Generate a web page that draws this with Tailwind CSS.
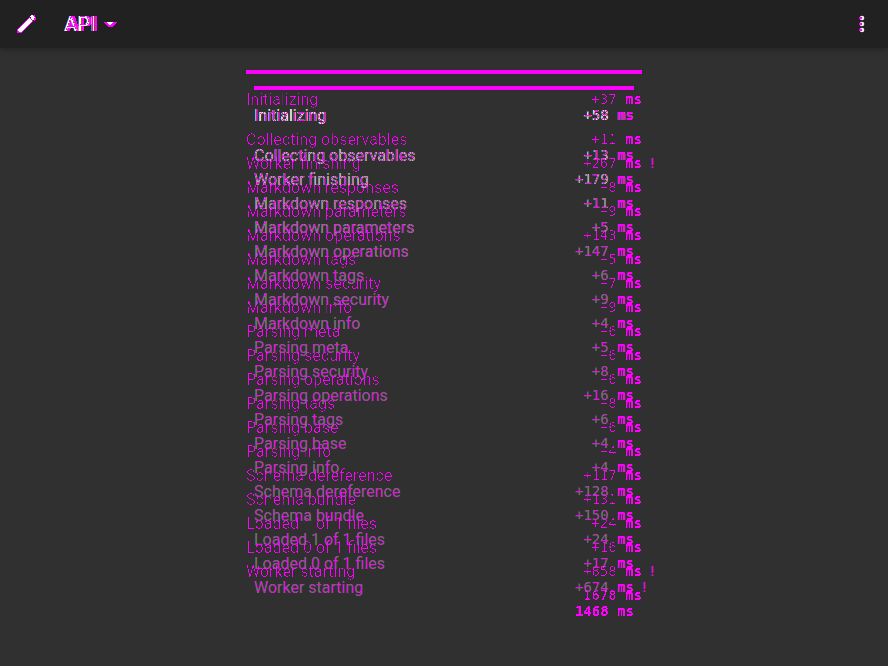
<!DOCTYPE html>
<html lang="en">
<head>
<meta charset="utf-8">
<title>API</title>
<script src="https://cdn.jsdelivr.net/npm/@tailwindcss/browser@4"></script>
</head>
<body class="h-[666px] w-[888px] overflow-hidden bg-[#303030] font-[Roboto,sans-serif] text-white">
<svg width="0" height="0" class="absolute">
  <filter id="core" x="-5%" y="-5%" width="110%" height="110%"><feComponentTransfer><feFuncA type="linear" slope="20" intercept="-17.6"/></feComponentTransfer></filter>
  <filter id="trace" x="-5%" y="-5%" width="110%" height="110%"><feComponentTransfer><feFuncA type="linear" slope="20" intercept="-15.5"/></feComponentTransfer></filter>
  <filter id="solid" x="-5%" y="-5%" width="110%" height="110%"><feComponentTransfer><feFuncA type="linear" slope="20" intercept="-9"/></feComponentTransfer></filter>
</svg>
<header class="relative z-10 flex h-12 items-center bg-[#212121] pl-4 pr-4 shadow-[0_2px_5px_rgba(0,0,0,0.25)]">
  <svg class="mr-6 size-6" viewBox="0 0 24 24" shape-rendering="crispEdges">
    <path fill="#ff00ff" d="M1 17L13 5l5 4L5 21H1zM14 5l2-2h3l1 4-2 2z"/>
    <path fill="#fff" d="M2 17L13 6l3 3L5 20H3zM14 4l2-1 3 2-1 3-2 0z"/>
  </svg>
  <div class="relative text-[20px] font-medium leading-6">
    <span class="absolute left-[3px] top-0 text-[#ff00ff] [filter:url(#solid)]">API</span>
    <span class="relative">API</span>
    <span class="absolute left-px top-0 font-light text-[#ff00ff] [filter:url(#trace)]">API</span>
  </div>
  <svg class="ml-[7px] h-2 w-3.5" viewBox="0 0 14 8" shape-rendering="crispEdges"><path fill="#ff00ff" d="M0 2h14L9 7H5z"/><path fill="#fff" d="M3 2h7L8 5H6z"/></svg>
  <svg class="ml-auto mr-[-2px] h-6 w-6" viewBox="0 0 24 24">
    <g fill="#eee"><circle cx="12" cy="6" r="2.3"/><circle cx="12" cy="12" r="2.3"/><circle cx="12" cy="18" r="2.3"/></g>
    <path stroke="#ff00ff" stroke-width="2" d="M9 6h3M9 12h3M9 18h3"/>
  </svg>
</header>
<main class="relative">
  <section id="previous" class="absolute left-[246px] top-[22px] w-[396px] text-[#ff00ff]"><div class="h-1 bg-[#ff00ff]"></div></section>
  <section id="current" class="absolute left-[254px] top-[38px] w-[380px]"><div class="h-1 bg-[#ff00ff]"></div></section>
</main>
<script>
const rows = [
  ['Initializing', '+58', '+37', '#ffffff'],
  ['Collecting observables', '+13', '+11', '#c8c8c8'],
  ['Worker finishing', '+179', '+267', '#c0c0c0'],
  ['Markdown responses', '+11', '+8', '#a8a8a8'],
  ['Markdown parameters', '+5', '+9', '#929292'],
  ['Markdown operations', '+147', '+143', '#858585'],
  ['Markdown tags', '+6', '+5', '#7c7c7c'],
  ['Markdown security', '+9', '+7', '#7c7c7c'],
  ['Markdown info', '+4', '+9', '#7a7a7a'],
  ['Parsing meta', '+5', '+6', '#777777'],
  ['Parsing security', '+8', '+6', '#777777'],
  ['Parsing operations', '+16', '+6', '#777777'],
  ['Parsing tags', '+6', '+8', '#777777'],
  ['Parsing base', '+4', '+6', '#777777'],
  ['Parsing info', '+4', '+4', '#777777'],
  ['Schema dereference', '+128', '+117', '#777777'],
  ['Schema bundle', '+150', '+131', '#777777'],
  ['Loaded 1 of 1 files', '+24', '+24', '#777777'],
  ['Loaded 0 of 1 files', '+17', '+16', '#777777'],
  ['Worker starting', '+674', '+858', '#777777', 1]
];
const mono = 'relative -top-px font-[DejaVu_Sans_Mono,monospace] text-[14px] whitespace-pre';
const line = 'flex h-6 items-center justify-between text-[16px] leading-6 whitespace-nowrap';
const trace = '[filter:url(#trace)]';
const core = '[filter:url(#core)]';
const solid = '[filter:url(#solid)]';
const previous = document.getElementById('previous');
const current = document.getElementById('current');
let old = '<div class="pt-[14px]">', now = '', accent = '';
rows.forEach(([label, time, before, shade, slow], i) => {
  const gap = i === 0 ? ' mb-4' : '';
  const mark = on => on ? '<span class="absolute left-full top-0 pl-1.5">!</span>' : '';
  old += `<div class="${line}${gap}"><span class="${trace}">${label}</span><span class="${mono}"><span class="${trace}">${before}</span> <b class="${solid}">ms</b>${mark(i === 2 || slow)}</span></div>`;
  now += `<div class="${line}${gap}" style="color:${shade}"><span>${label}</span><span class="${mono}">${time} ms</span></div>`;
  accent += `<div class="${line}${gap}"><span class="${core}">${label}</span><span class="${mono}"><span class="${core}">${time}</span> <b class="${solid}">ms</b>${mark(slow)}</span></div>`;
});
old += `<div class="${line}"><span></span><b class="${mono}"><span class="${trace}">1678</span> <span class="${solid}">ms</span></b></div></div>`;
accent += `<div class="${line}"><span></span><b class="${mono} ${solid}">1468 ms</b></div>`;
previous.innerHTML += old;
current.innerHTML += `<div class="relative pt-[14px]">${now}<div class="absolute inset-x-0 top-[14px] text-[#ff00ff]">${accent}</div></div>`;
</script>
</body>
</html>
